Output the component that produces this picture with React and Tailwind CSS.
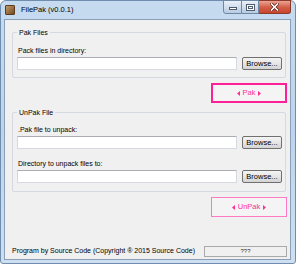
import React from 'react'

const font = { fontFamily: '"Liberation Sans", Arial, sans-serif' }

function Arrow({ dir }) {
  return (
    <svg width="3" height="5" viewBox="0 0 3 5" className="shrink-0">
      {dir === 'left' ? <polygon points="3,0 3,5 0,2.5" fill="#ff2f9a" /> : <polygon points="0,0 0,5 3,2.5" fill="#ff2f9a" />}
    </svg>
  )
}

function TextBox() {
  return <div className="h-[13px] w-[220px] bg-white border border-[#d6d9df] border-t-[#abadb3]" />
}

function BrowseButton() {
  return (
    <div className="h-[13px] w-[40px] flex items-center justify-center rounded-[2px] border border-[#707070] bg-gradient-to-b from-[#f4f4f4] via-[#e6e6e6] to-[#d3d3d3] text-[7.5px] leading-none text-black">
      Browse...
    </div>
  )
}

function Field({ label, labelGap }) {
  return (
    <div className={labelGap}>
      <div className="h-[9px] leading-[9px] pl-[5px] text-[7px] text-black">{label}</div>
      <div className="mt-[2px] pl-[4px] flex items-center gap-[5px]">
        <TextBox />
        <BrowseButton />
      </div>
    </div>
  )
}

function GroupBox({ title, className, children }) {
  return (
    <div className={`relative ml-[7px] mr-[4px] border border-[#d5dae0] rounded-[2px] ${className}`}>
      <span className="absolute -top-[5px] left-[4px] bg-[#f0f0f0] px-[2px] text-[7px] leading-[9px] text-black">{title}</span>
      {children}
    </div>
  )
}

function PinkButton({ label, strong }) {
  return (
    <div
      className={`self-end mr-[3px] h-[20px] w-[76px] flex items-center justify-center gap-[3px] bg-[#f4f4f4] text-[7.5px] text-[#ff2f9a] ${
        strong ? 'border-2 border-[#ff1f97]' : 'border-[1.5px] border-[#ff7ac4]'
      }`}
    >
      <Arrow dir="left" />
      <span>{label}</span>
      <Arrow dir="right" />
    </div>
  )
}

function TitleButtons() {
  return (
    <div className="self-start flex mr-[0px] -mt-[1px]">
      <div className="w-[19px] h-[14px] rounded-bl-[3px] border border-[#6e87a3] bg-gradient-to-b from-[#e9f0f8] via-[#d2dfee] to-[#b7cbe2] flex items-end justify-center pb-[3px]">
        <div className="w-[8px] h-[3px] bg-white border border-[#4f5d6e]" />
      </div>
      <div className="w-[17px] h-[14px] border border-l-0 border-[#6e87a3] bg-gradient-to-b from-[#e9f0f8] via-[#d2dfee] to-[#b7cbe2] flex items-center justify-center">
        <div className="w-[9px] h-[7px] border border-[#4f5d6e] bg-white p-[1px]">
          <div className="w-full h-full border border-[#4f5d6e]" />
        </div>
      </div>
      <div className="w-[32px] h-[14px] rounded-br-[3px] border border-l-0 border-[#8c3a2c] bg-gradient-to-b from-[#eba494] via-[#d4604a] to-[#c8432c] flex items-center justify-center">
        <svg width="9" height="8" viewBox="0 0 9 8">
          <path d="M1.5 1 L7.5 7 M7.5 1 L1.5 7" stroke="#5a2016" strokeWidth="3" strokeLinecap="square" />
          <path d="M1.5 1 L7.5 7 M7.5 1 L1.5 7" stroke="#ffffff" strokeWidth="1.6" strokeLinecap="square" />
        </svg>
      </div>
    </div>
  )
}

export default function App() {
  return (
    <div className="w-[300px] h-[268px] bg-white overflow-hidden" style={font}>
      <div className="w-[296px] h-[264px] flex flex-col rounded-t-[6px] rounded-b-[3px] border border-[#6f8eae] bg-gradient-to-b from-[#c6dbf0] via-[#bed4ec] to-[#cddff1] pl-[3px] pr-[4px] pb-[3px]">
        {/* Title bar */}
        <div className="h-[18px] shrink-0 flex items-center">
          <div className="ml-[1px] w-[10px] h-[10px] rounded-[1px] bg-gradient-to-br from-[#c29a6a] via-[#9c7243] to-[#6f4b27] border border-[#5b3c1e]" />
          <span className="ml-[6px] text-[7.5px] text-black">FilePak (v0.0.1)</span>
          <div className="ml-auto h-full flex">
            <TitleButtons />
          </div>
        </div>

        {/* Client area */}
        <div className="flex-1 flex flex-col border border-[#8aa0b8] bg-[#f0f0f0]">
          <GroupBox title="Pak Files" className="mt-[12px] h-[46px]">
            <Field label="Pack files in directory:" labelGap="pt-[13px]" />
          </GroupBox>

          <div className="mt-[5px] flex flex-col">
            <PinkButton label="Pak" strong />
          </div>

          <GroupBox title="UnPak File" className="mt-[9px] h-[80px]">
            <Field label=".Pak file to unpack:" labelGap="pt-[12px]" />
            <Field label="Directory to unpack files to:" labelGap="mt-[10px]" />
          </GroupBox>

          <div className="mt-[5px] flex flex-col">
            <PinkButton label="UnPak" />
          </div>

          <div className="mt-auto mb-[2px] flex items-center pl-[7px] pr-[3px]">
            <span className="text-[7px] text-black whitespace-nowrap">Program by Source Code (Copyright ® 2015 Source Code)</span>
            <div className="ml-auto w-[83px] h-[11px] border border-[#a9a9a9] flex items-center justify-center text-[6px] text-[#333]">
              ???
            </div>
          </div>
        </div>
      </div>
    </div>
  )
}
